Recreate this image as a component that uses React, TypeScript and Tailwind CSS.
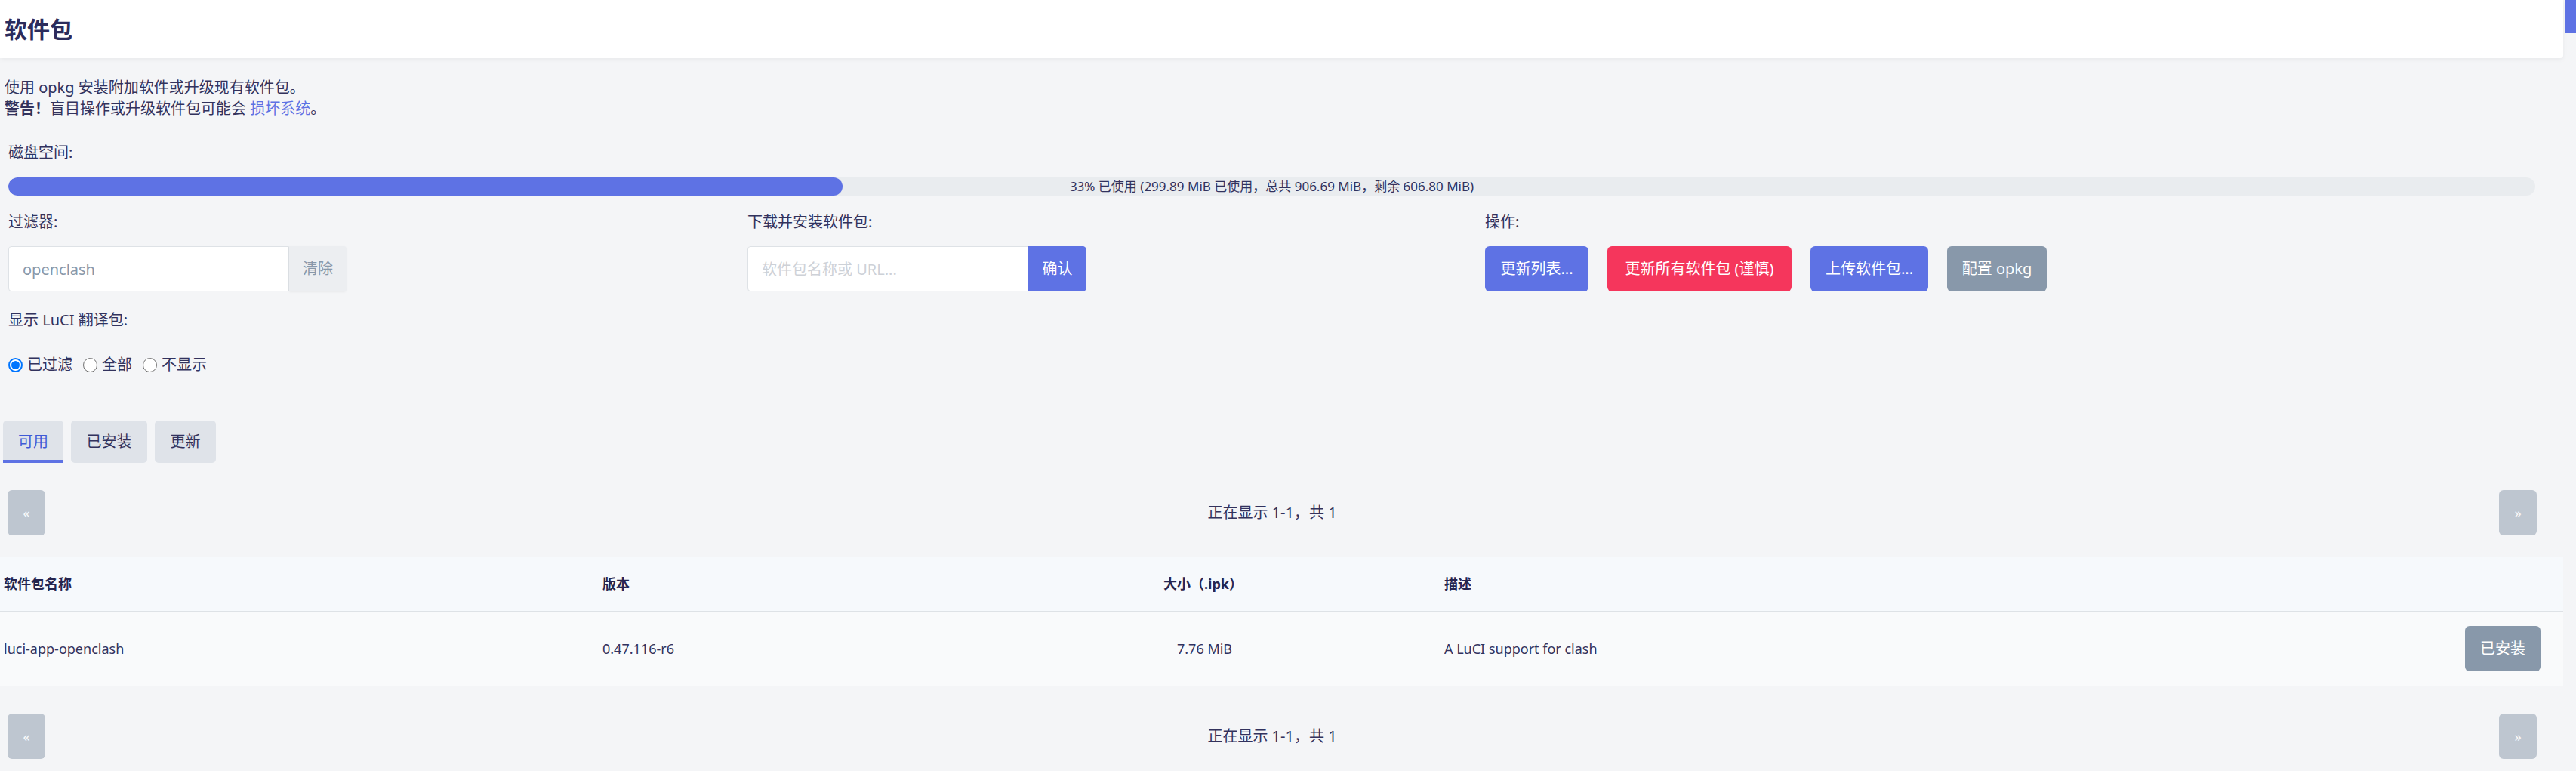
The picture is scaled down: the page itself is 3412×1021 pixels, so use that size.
import type { ReactNode } from 'react';

/**
 * LuCI "软件包" page in the Argon theme: disk usage, filter / install / actions
 * row, translation radio group, tabs, and the one-row package table with
 * pagination above and below.
 */

type ActionButtonProps = {
    label: string;
    width: string;
    tone: 'primary' | 'danger' | 'neutral';
};

const toneClass: Record<ActionButtonProps['tone'], string> = {
    primary: 'bg-[#5e72e4]',
    danger: 'bg-[#f5365c]',
    neutral: 'bg-[#8898aa]',
};

function ActionButton({ label, width, tone }: ActionButtonProps) {
    return (
        <button className={`${width} ${toneClass[tone]} h-[60px] rounded-[6px] text-[20px] text-white`}>
            {label}
        </button>
    );
}

function Pager() {
    return (
        <div className="flex w-[3360px] items-center justify-between pl-[10px]">
            <button className="h-[60px] w-[50px] rounded-[6px] bg-[#bec6d0] text-[18px] text-white/90">«</button>
            <span className="text-[20px]">正在显示 1-1，共 1</span>
            <button className="h-[60px] w-[50px] rounded-[6px] bg-[#bec6d0] text-[18px] text-white/90">»</button>
        </div>
    );
}

function Label({ children }: { children: ReactNode }) {
    return <div className="text-[20px] leading-[28px]">{children}</div>;
}

// Drawn rather than native, so the 19px circle and its spacing come out the same every time.
function Radio({ label, checked }: { label: string; checked?: boolean }) {
    return (
        <label className="flex items-center gap-[6px]">
            {checked ? (
                <span className="flex h-[19px] w-[19px] items-center justify-center rounded-full border-2 border-[#0075ff] bg-white">
                    <span className="h-[11px] w-[11px] rounded-full bg-[#0075ff]" />
                </span>
            ) : (
                <span className="h-[19px] w-[19px] rounded-full border-[1.5px] border-[#6f6f6f] bg-white" />
            )}
            <span>{label}</span>
        </label>
    );
}

const cols = 'grid grid-cols-[793px_743px_372px_1fr_130px] items-center';

export default function App() {
    return (
        <div className="flex min-h-[1021px] w-[3412px] bg-[#f4f5f7] font-['Noto_Sans','Noto_Sans_CJK_SC',sans-serif] text-[#32325d]">
            <main className="w-[3395px]">
                <header className="flex h-[77px] items-center rounded-br-[4px] bg-white pl-[6px] shadow-[0_2px_6px_rgba(0,0,0,0.05)]">
                    <h2 className="text-[30px] font-bold text-[#2b2c5c]">软件包</h2>
                </header>

                <div className="mt-[25px] pl-[6px] text-[20px] leading-[28px]">
                    <p>使用 opkg 安装附加软件或升级现有软件包。</p>
                    <p>
                        <strong>警告！</strong>盲目操作或升级软件包可能会 <a className="text-[#5e72e4]">损坏系统</a>。
                    </p>
                </div>

                <section className="mt-[30px] pl-[11px]">
                    <Label>磁盘空间:</Label>
                    <div className="relative mt-[19px] h-[24px] w-[3347px] overflow-hidden rounded-full bg-[#e9ecef]">
                        <div className="h-full w-[33%] rounded-full bg-[#5e72e4]" />
                        <span className="absolute inset-0 flex items-center justify-center text-[17px]">
                            33% 已使用 (299.89 MiB 已使用，总共 906.69 MiB，剩余 606.80 MiB)
                        </span>
                    </div>

                    <div className="mt-[21px] grid grid-cols-[979px_977px_auto]">
                        <div>
                            <Label>过滤器:</Label>
                            <div className="mt-[18px] flex">
                                <input
                                    defaultValue="openclash"
                                    className="h-[60px] w-[372px] rounded-l-[4px] border border-[#dee2e6] bg-white pl-[18px] text-[20px] text-[#8898aa] outline-none"
                                />
                                <button className="h-[60px] w-[76px] rounded-r-[4px] bg-[#eceef1] text-[20px] text-[#8898aa] shadow-[0_1px_3px_rgba(0,0,0,0.05)]">
                                    清除
                                </button>
                            </div>
                        </div>
                        <div>
                            <Label>下载并安装软件包:</Label>
                            <div className="mt-[18px] flex">
                                <input
                                    placeholder="软件包名称或 URL..."
                                    className="h-[60px] w-[372px] rounded-l-[4px] border border-[#dee2e6] bg-white pl-[18px] text-[20px] outline-none placeholder:text-[#cdd1d7]"
                                />
                                <button className="h-[60px] w-[77px] rounded-r-[5px] bg-[#5e72e4] text-[20px] text-white">
                                    确认
                                </button>
                            </div>
                        </div>
                        <div>
                            <Label>操作:</Label>
                            <div className="mt-[18px] flex gap-[25px]">
                                <ActionButton label="更新列表..." width="w-[137px]" tone="primary" />
                                <ActionButton label="更新所有软件包 (谨慎)" width="w-[244px]" tone="danger" />
                                <ActionButton label="上传软件包..." width="w-[156px]" tone="primary" />
                                <ActionButton label="配置 opkg" width="w-[132px]" tone="neutral" />
                            </div>
                        </div>
                    </div>

                    <div className="mt-[24px]">
                        <Label>显示 LuCI 翻译包:</Label>
                    </div>
                    <div className="mt-[31px] flex h-[28px] items-center gap-[14px] text-[20px]">
                        <Radio label="已过滤" checked />
                        <Radio label="全部" />
                        <Radio label="不显示" />
                    </div>
                </section>

                <nav className="mt-[60px] flex gap-[10px] pl-[4px] text-[20px]">
                    <div className="flex h-[56px] w-[80px] items-center justify-center rounded-t-[5px] border-b-4 border-[#5e72e4] bg-[#dfe3e9] pt-[4px] text-[#3f5bd6]">
                        可用
                    </div>
                    <div className="flex h-[56px] w-[101px] items-center justify-center rounded-[5px] bg-[#dfe3e9]">
                        已安装
                    </div>
                    <div className="flex h-[56px] w-[81px] items-center justify-center rounded-[5px] bg-[#dfe3e9]">
                        更新
                    </div>
                </nav>

                <div className="mt-[36px]">
                    <Pager />
                </div>

                <div className="mt-[28px] w-[3395px] text-[18px]">
                    <div className={`${cols} h-[73px] border-b border-[#dee2e6] bg-[#f6f9fc] font-bold text-[#25254f]`}>
                        <div className="pl-[5px]">软件包名称</div>
                        <div className="pl-[5px]">版本</div>
                        <div className="pl-[5px]">大小（.ipk）</div>
                        <div className="pl-[5px]">描述</div>
                        <div />
                    </div>
                    <div className={`${cols} h-[98px] bg-[#f9fafb]`}>
                        <div className="pl-[5px]">
                            luci-app-<span className="underline">openclash</span>
                        </div>
                        <div className="pl-[5px]">0.47.116-r6</div>
                        <div className="pl-[23px]">7.76 MiB</div>
                        <div className="pl-[5px]">A LuCI support for clash</div>
                        <div className="flex justify-end pr-[30px]">
                            <button className="h-[60px] w-[100px] rounded-[6px] bg-[#8898aa] text-[20px] text-white">
                                已安装
                            </button>
                        </div>
                    </div>
                </div>

                <div className="mt-[37px]">
                    <Pager />
                </div>
            </main>
            <div className="w-[17px] pl-[2px]">
                <div className="h-[44px] bg-[#5e72e4]" />
            </div>
        </div>
    );
}
